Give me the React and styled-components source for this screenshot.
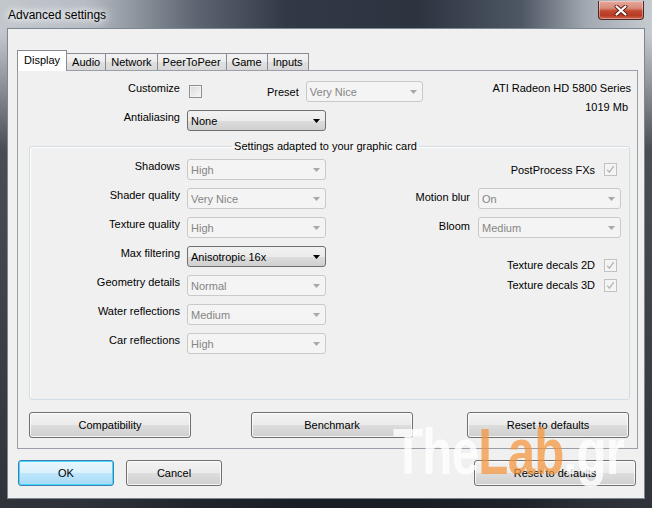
import styled, { createGlobalStyle } from 'styled-components'

const GlobalStyle = createGlobalStyle`
    html, body {
        margin: 0;
        padding: 0;
        background: #1f252c;
    }
    body {
        font-family: "Liberation Sans", Arial, sans-serif;
        font-size: 11px;
    }
`;

const Window = styled.div`
    position: relative;
    width: 652px;
    height: 508px;
    display: flex;
    flex-direction: column;
    overflow: hidden;
    background:
        linear-gradient(180deg, rgba(22,26,32,0) 0px, rgba(22,26,32,0) 34px, rgba(22,26,32,0.7) 150px, rgba(22,26,32,0.85) 100%),
        linear-gradient(90deg, #c2c7cd 0%, #b7bdc4 13%, #5c6571 30%, #313946 44%, #2c3440 64%, #4e5764 80%, #a2a9b1 90%, #c6cbd0 100%);
`;

const TitleBar = styled.div`
    height: 28px;
    flex-shrink: 0;
    display: flex;
    align-items: flex-start;
    justify-content: space-between;
`;

const Title = styled.span`
    margin: 8px 0 0 8px;
    font-size: 12px;
    line-height: 14px;
    color: #000;
    text-shadow: 0 0 6px #fff, 0 0 10px #fff, 0 0 14px #fff;
`;

const CloseButton = styled.div`
    width: 46px;
    height: 19px;
    margin: 1px 8px 0 0;
    box-sizing: border-box;
    border: 1px solid #4a2a26;
    border-top: none;
    border-radius: 0 0 4px 4px;
    background: linear-gradient(180deg, #e6a99d 0%, #d88a78 40%, #c24a32 55%, #b83a22 80%, #d2654c 100%);
    box-shadow: inset 0 0 0 1px rgba(255,255,255,0.35);
    display: flex;
    align-items: center;
    justify-content: center;
`;

const Client = styled.div`
    flex: 1;
    margin: 0 7px 9px 7px;
    background: #f0f0f0;
    border: 1px solid #7d8691;
    display: flex;
    flex-direction: column;
    padding: 21px 0 0 9px;
`;

const TabWidget = styled.div`
    width: 621px;
    display: flex;
    flex-direction: column;
`;

const TabBar = styled.div`
    height: 20px;
    display: flex;
    align-items: flex-end;
`;

const Tab = styled.div`
    position: relative;
    z-index: ${p => (p.$active ? 1 : 0)};
    box-sizing: border-box;
    height: ${p => (p.$active ? 21 : 17)}px;
    margin-bottom: ${p => (p.$active ? -1 : 0)}px;
    margin-left: ${p => (p.$first ? 0 : -1)}px;
    padding: 0 ${p => (p.$active ? 6 : 5)}px ${p => (p.$active ? 2 : 0)}px;
    border: 1px solid #898c95;
    border-bottom: none;
    background: ${p => (p.$active ? '#ffffff' : 'linear-gradient(180deg, #f3f3f3 0%, #ececec 50%, #e0e0e0 51%, #d8d8d8 100%)')};
    color: #000;
    display: flex;
    align-items: center;
    white-space: nowrap;
`;

const Panel = styled.div`
    height: 379px;
    box-sizing: border-box;
    border: 1px solid #9a9ea6;
    background: #f0f0f0;
    display: flex;
    flex-direction: column;
`;

const TopSection = styled.div`
    display: flex;
    padding-top: 10px;
`;

const FormRows = styled.div`
    display: flex;
    flex-direction: column;
    gap: 8px;
`;

const Row = styled.div`
    display: flex;
    align-items: center;
    gap: ${p => p.$gap ?? 7}px;
    height: ${p => p.$h ?? 21}px;
    justify-content: ${p => (p.$end ? 'flex-end' : 'flex-start')};
    padding-right: ${p => p.$pr ?? 0}px;
`;

const Label = styled.span`
    width: ${p => (p.$w ? `${p.$w}px` : 'auto')};
    text-align: right;
    line-height: 14px;
    color: #000;
    white-space: nowrap;
    align-self: ${p => (p.$top ? 'flex-start' : 'center')};
    margin-left: ${p => p.$ml ?? 0}px;
    margin-top: ${p => p.$mt ?? 0}px;
`;

const CardInfo = styled.div`
    margin-left: auto;
    padding-right: 6px;
    display: flex;
    flex-direction: column;
    align-items: flex-end;
    gap: 5px;
    line-height: 14px;
    color: #000;
`;

const Memory = styled.span`
    padding-right: 3px;
`;

const Combo = styled.div`
    width: ${p => p.$w}px;
    height: 21px;
    box-sizing: border-box;
    flex-shrink: 0;
    display: flex;
    align-items: center;
    justify-content: space-between;
    padding: 1px 5px 0 3px;
    border-radius: 3px;
    border: 1px solid ${p => (p.$active ? '#707070' : '#c9c9c9')};
    background: ${p => (p.$active ? 'linear-gradient(180deg, #f2f2f2 0%, #ebebeb 50%, #dddddd 51%, #cfcfcf 100%)' : '#f4f4f4')};
    color: ${p => (p.$active ? '#000' : '#858585')};
    white-space: nowrap;
`;

const Check = styled.span`
    width: 13px;
    height: 13px;
    box-sizing: border-box;
    flex-shrink: 0;
    margin-left: ${p => p.$ml ?? 0}px;
    border: 1px solid ${p => (p.$checked ? '#c2c2c2' : '#8e8f8f')};
    background: ${p => (p.$checked ? '#f4f4f4' : 'linear-gradient(135deg, #d8d8d8 0%, #ececec 60%, #f6f6f6 100%)')};
    box-shadow: inset 0 0 0 1px #f4f4f4;
    display: flex;
    align-items: center;
    justify-content: center;
`;

const GroupBox = styled.fieldset`
    margin: 8px 7px 0 11px;
    padding: 6px 8px 45px 0;
    border: 1px solid #d3dce2;
    border-radius: 3px;
    box-shadow: inset 1px 1px 0 #ffffff;
    display: flex;
    min-width: 0;
`;

const GroupTitle = styled.legend`
    margin: 0 auto;
    padding: 0 2px;
    line-height: 14px;
    color: #000;
`;

const LeftColumn = styled.div`
    display: flex;
    flex-direction: column;
    gap: 8px;
`;

const RightColumn = styled.div`
    flex: 1;
    display: flex;
    flex-direction: column;
    gap: 8px;
`;

const DecalRows = styled.div`
    display: flex;
    flex-direction: column;
    margin-top: 9px;
`;

const ButtonRow = styled.div`
    display: flex;
    gap: ${p => p.$gap ?? 0}px;
    margin: ${p => p.$margin};
`;

const Button = styled.button`
    width: ${p => p.$w}px;
    height: 26px;
    box-sizing: border-box;
    padding: 0;
    margin-left: ${p => (p.$push ? 'auto' : `${p.$ml ?? 0}px`)};
    border: 1px solid ${p => (p.$default ? '#3c7fb1' : '#707070')};
    border-radius: 3px;
    font-family: "Liberation Sans", Arial, sans-serif;
    font-size: 11px;
    color: #000;
    background: ${p => (p.$default
        ? 'linear-gradient(180deg, #eaf6fd 0%, #d9f0fc 50%, #bee6fd 51%, #a7d9f5 100%)'
        : 'linear-gradient(180deg, #f2f2f2 0%, #ebebeb 50%, #dddddd 51%, #cfcfcf 100%)')};
    box-shadow: inset 0 0 0 1px ${p => (p.$default ? '#48d8fb' : 'rgba(255,255,255,0.75)')};
`;

const Watermark = styled.div`
    position: absolute;
    left: 393px;
    top: 420px;
    font-family: "Liberation Sans", Arial, sans-serif;
    font-weight: bold;
    font-size: 64px;
    line-height: 64px;
    letter-spacing: -1px;
    white-space: nowrap;
    transform: scaleX(0.77);
    transform-origin: left top;
    pointer-events: none;
    color: rgba(255, 255, 255, 0.8);
`;

const Orange = styled.span`
    color: rgba(244, 148, 60, 0.72);
`;

function Arrow({ active }) {
    return (
        <svg width="7" height="4" viewBox="0 0 7 4">
            <path d="M0 0 H7 L3.5 4 Z" fill={active ? '#000' : '#a8a8a8'} />
        </svg>
    )
}

function Tick() {
    return (
        <svg width="9" height="9" viewBox="0 0 9 9">
            <path d="M1.2 4.6 L3.4 7.2 L7.8 1.2" fill="none" stroke="#b4b4b4" strokeWidth="1.3" />
        </svg>
    )
}

function Select({ value, width = 139, active }) {
    return (
        <Combo $w={width} $active={active}>
            <span>{value}</span>
            <Arrow active={active} />
        </Combo>
    )
}

const tabs = ['Display', 'Audio', 'Network', 'PeerToPeer', 'Game', 'Inputs'];

const leftSettings = [
    { label: 'Shadows', value: 'High' },
    { label: 'Shader quality', value: 'Very Nice' },
    { label: 'Texture quality', value: 'High' },
    { label: 'Max filtering', value: 'Anisotropic 16x', active: true },
    { label: 'Geometry details', value: 'Normal' },
    { label: 'Water reflections', value: 'Medium' },
    { label: 'Car reflections', value: 'High' },
];

export default function App() {
    return (
        <>
            <GlobalStyle />
            <Window>
                <TitleBar>
                    <Title>Advanced settings</Title>
                    <CloseButton>
                        <svg width="14" height="11" viewBox="0 0 14 11">
                            <path d="M2.5 1.5 L11.5 9.5 M11.5 1.5 L2.5 9.5" stroke="#5a1c12" strokeWidth="4" strokeLinecap="round" />
                            <path d="M2.5 1.5 L11.5 9.5 M11.5 1.5 L2.5 9.5" stroke="#ffffff" strokeWidth="2.2" strokeLinecap="round" />
                        </svg>
                    </CloseButton>
                </TitleBar>

                <Client>
                    <TabWidget>
                        <TabBar>
                            {tabs.map((t, i) => (
                                <Tab key={t} $active={i === 0} $first={i === 0}>{t}</Tab>
                            ))}
                        </TabBar>
                        <Panel>
                            <TopSection>
                                <FormRows>
                                    <Row>
                                        <Label $w={162} $top>Customize</Label>
                                        <Check $ml={2} />
                                        <Label $ml={58}>Preset</Label>
                                        <Select value="Very Nice" width={117} />
                                    </Row>
                                    <Row>
                                        <Label $w={162} $top>Antialiasing</Label>
                                        <Select value="None" active />
                                    </Row>
                                </FormRows>
                                <CardInfo>
                                    <span>ATI Radeon HD 5800 Series</span>
                                    <Memory>1019 Mb</Memory>
                                </CardInfo>
                            </TopSection>

                            <GroupBox>
                                <GroupTitle>Settings adapted to your graphic card</GroupTitle>
                                <LeftColumn>
                                    {leftSettings.map(s => (
                                        <Row key={s.label}>
                                            <Label $w={150} $top>{s.label}</Label>
                                            <Select value={s.value} active={s.active} />
                                        </Row>
                                    ))}
                                </LeftColumn>
                                <RightColumn>
                                    <Row $end $gap={9} $pr={4}>
                                        <Label>PostProcess FXs</Label>
                                        <Check $checked><Tick /></Check>
                                    </Row>
                                    <Row $end $gap={8}>
                                        <Label $top $mt={2}>Motion blur</Label>
                                        <Select value="On" width={143} />
                                    </Row>
                                    <Row $end $gap={8}>
                                        <Label $top $mt={2}>Bloom</Label>
                                        <Select value="Medium" width={143} />
                                    </Row>
                                    <DecalRows>
                                        <Row $end $gap={9} $pr={4} $h={20}>
                                            <Label>Texture decals 2D</Label>
                                            <Check $checked><Tick /></Check>
                                        </Row>
                                        <Row $end $gap={9} $pr={4} $h={20}>
                                            <Label>Texture decals 3D</Label>
                                            <Check $checked><Tick /></Check>
                                        </Row>
                                    </DecalRows>
                                </RightColumn>
                            </GroupBox>

                            <ButtonRow $margin="12px 0 0 11px">
                                <Button $w={162}>Compatibility</Button>
                                <Button $w={162} $ml={60}>Benchmark</Button>
                                <Button $w={162} $ml={54}>Reset to defaults</Button>
                            </ButtonRow>
                        </Panel>
                    </TabWidget>

                    <ButtonRow $gap={12} $margin="11px 8px 0 1px">
                        <Button $w={96} $default>OK</Button>
                        <Button $w={96}>Cancel</Button>
                        <Button $w={162} $push>Reset to defaults</Button>
                    </ButtonRow>
                </Client>

                <Watermark>The<Orange>Lab</Orange>.gr</Watermark>
            </Window>
        </>
    )
}
